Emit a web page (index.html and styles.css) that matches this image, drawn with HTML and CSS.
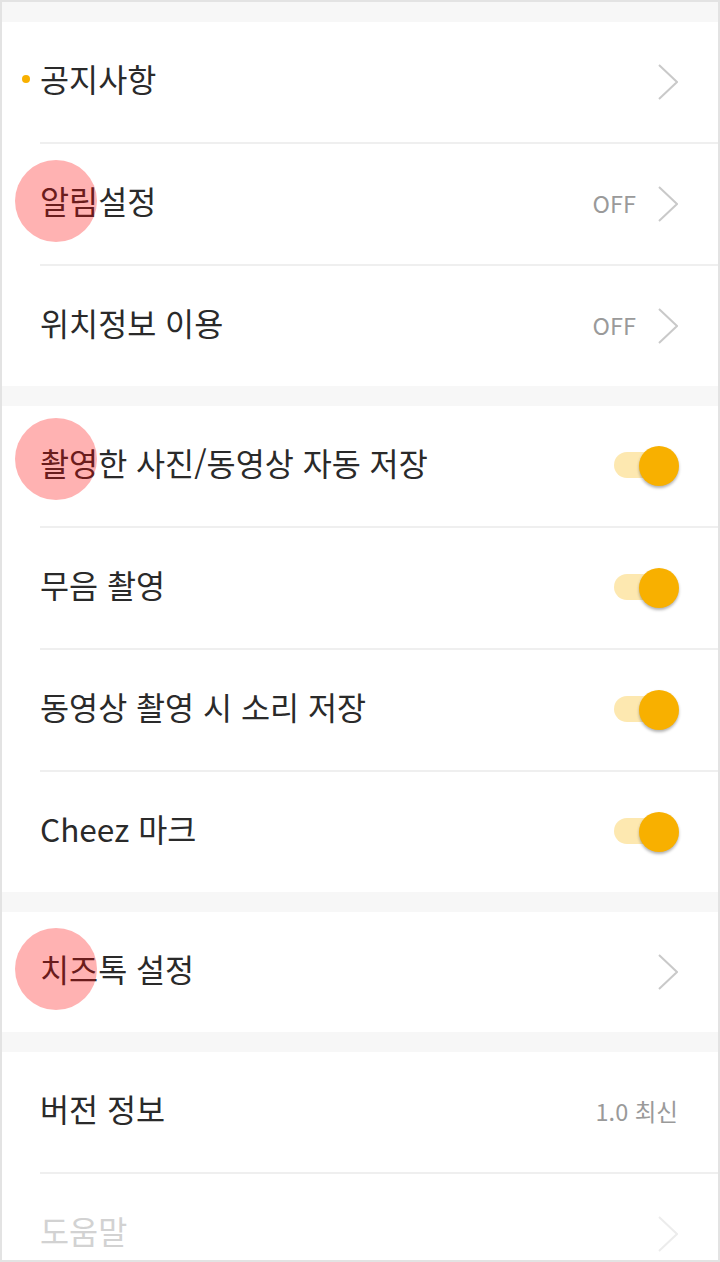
FILE: index.html
```html
<!DOCTYPE html>
<html lang="ko">
<head>
  <meta charset="UTF-8">
  <meta name="viewport" content="width=device-width, initial-scale=1.0">
  <title>설정</title>
  <link rel="stylesheet" href="styles.css">
</head>
<body>
  <div class="screen">

    <!-- 기본 설정 -->
    <div class="group">
      <div class="row row-new">
        <span class="label">공지사항</span>
        <svg class="chevron" viewBox="0 0 20 36"><polyline points="1,1 19,18 1,35"/></svg>
      </div>
      <div class="row">
        <span class="touch"></span>
        <span class="label">알림설정</span>
        <span class="value">OFF</span>
        <svg class="chevron" viewBox="0 0 20 36"><polyline points="1,1 19,18 1,35"/></svg>
      </div>
      <div class="row">
        <span class="label">위치정보 이용</span>
        <span class="value">OFF</span>
        <svg class="chevron" viewBox="0 0 20 36"><polyline points="1,1 19,18 1,35"/></svg>
      </div>
    </div>

    <!-- 촬영 설정 -->
    <div class="group">
      <div class="row">
        <span class="touch touch-high"></span>
        <span class="label">촬영한 사진/동영상 자동 저장</span>
        <span class="switch on"><span class="track"></span><span class="knob"></span></span>
      </div>
      <div class="row">
        <span class="label">무음 촬영</span>
        <span class="switch on"><span class="track"></span><span class="knob"></span></span>
      </div>
      <div class="row">
        <span class="label">동영상 촬영 시 소리 저장</span>
        <span class="switch on"><span class="track"></span><span class="knob"></span></span>
      </div>
      <div class="row">
        <span class="label">Cheez 마크</span>
        <span class="switch on"><span class="track"></span><span class="knob"></span></span>
      </div>
    </div>

    <!-- 치즈톡 -->
    <div class="group">
      <div class="row">
        <span class="touch"></span>
        <span class="label">치즈톡 설정</span>
        <svg class="chevron" viewBox="0 0 20 36"><polyline points="1,1 19,18 1,35"/></svg>
      </div>
    </div>

    <!-- 앱 정보 -->
    <div class="group">
      <div class="row">
        <span class="label">버전 정보</span>
        <span class="value value-end">1.0 최신</span>
      </div>
      <div class="row disabled">
        <span class="label">도움말</span>
        <svg class="chevron" viewBox="0 0 20 36"><polyline points="1,1 19,18 1,35"/></svg>
      </div>
    </div>

  </div>
</body>
</html>
```

FILE: styles.css
```css
body {
  margin: 0;
  font-family: "Noto Sans CJK KR", "Noto Sans", sans-serif;
  color: #2a2a2a;
}

.screen {
  box-sizing: border-box;
  width: 720px;
  height: 1262px;
  border: 2px solid #e3e3e3;
  background-color: #f7f7f7;
  padding-top: 20px;
  overflow: hidden;
}

.group {
  background-color: #fff;
  margin-bottom: 20px;
}

.row {
  position: relative;
  display: flex;
  align-items: center;
  height: 120px;
  margin-left: 38px;
  padding-right: 40px;
}

.row + .row {
  border-top: 2px solid #efefef;
}

.label {
  flex: 1;
  font-size: 31.6px;
  line-height: 1;
  padding-bottom: 6px;
}

/* 새 글 표시 */
.row-new::before {
  content: "";
  position: absolute;
  left: -18px;
  top: 53px;
  width: 8px;
  height: 8px;
  border-radius: 50%;
  background-color: #f8b000;
}

.value {
  font-size: 23.5px;
  color: #9a9a9a;
  margin-right: 22px;
  padding-bottom: 2px;
}

.value-end {
  margin-right: 0;
}

.chevron {
  width: 20px;
  height: 36px;
  fill: none;
  stroke: #c9c9c9;
  stroke-width: 2;
}

.switch {
  position: relative;
  width: 65px;
  height: 40px;
  margin-right: -1px;
}

.switch .track {
  position: absolute;
  left: 0;
  top: 6px;
  width: 56px;
  height: 26px;
  border-radius: 13px;
  background-color: #fde8b0;
}

.switch .knob {
  position: absolute;
  right: 0;
  top: 0;
  width: 40px;
  height: 40px;
  border-radius: 50%;
  background-color: #f8b000;
  box-shadow: 0 2px 3px rgba(0, 0, 0, 0.3);
}

.disabled .label {
  color: #d2d2d2;
}

.disabled .chevron {
  stroke: #ececec;
}

/* 터치 표시 */
.touch {
  position: absolute;
  left: -25px;
  top: 16px;
  width: 82px;
  height: 82px;
  border-radius: 50%;
  background-color: rgba(255, 0, 0, 0.3);
  z-index: 1;
}

.touch-high {
  top: 12px;
}
```
